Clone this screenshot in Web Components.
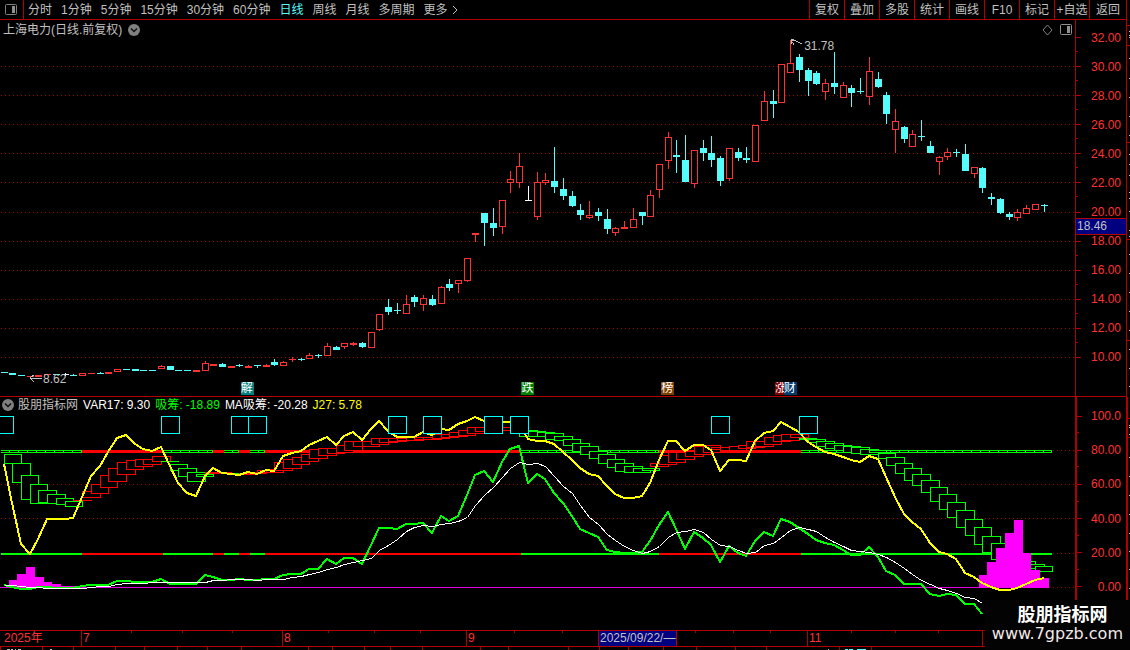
<!DOCTYPE html>
<html lang="zh-CN">
<head>
<meta charset="utf-8">
<title>上海电力</title>
<style>
    html, body {
        margin: 0;
        height: 100%;
        background: #000;
    }
    body {
        font-family: "Liberation Sans", "Noto Sans CJK SC", sans-serif;
        font-size: 12px;
        line-height: 16px;
        color: #c0c0c0;
        --line: #b00000;
        --red: #ff3232;
        --cyan: #54fcfc;
    }
</style>
</head>
<body>
<stock-terminal></stock-terminal>

<script>
const barX = i => Math.floor(4 + i * 8.74);

// velas: [tipo, máximo, cuerpo arriba, cuerpo abajo, mínimo]
// u = sube, d = baja, w = sin cambio
const VELAS = [
    ["d",372,372,373,373], ["d",373,373,375,375], ["d",375,375,376,376], ["u",376,376,377,377],
    ["u",375,375,377,377], ["u",374,374,375,375], ["d",374,374,375,375], ["w",373,374,375,376],
    ["d",374,375,376,376], ["u",373,373,376,376], ["u",373,373,374,374], ["d",372,373,374,374],
    ["u",372,372,374,374], ["u",369,369,372,372], ["d",369,369,370,370], ["d",369,369,371,371],
    ["d",370,370,371,371], ["d",370,370,371,371], ["u",365,366,369,369], ["d",366,366,370,370],
    ["d",370,370,371,371], ["d",370,370,371,371], ["u",370,370,372,372], ["u",361,363,371,371],
    ["u",364,364,366,366], ["d",363,364,367,367], ["u",366,366,368,368], ["d",364,365,366,367],
    ["u",365,366,368,368], ["d",365,365,366,368], ["u",364,365,367,367], ["d",359,362,365,366],
    ["u",361,362,366,366], ["u",357,359,360,362], ["d",358,359,360,361], ["u",353,355,359,359],
    ["d",354,355,356,358], ["u",343,346,356,356], ["d",346,347,350,350], ["u",343,343,347,349],
    ["u",342,343,345,346], ["d",342,343,347,348], ["u",332,332,348,348], ["u",314,314,330,331],
    ["d",299,307,312,315], ["d",303,310,311,314], ["u",295,304,314,314], ["d",295,297,302,307],
    ["u",295,298,305,311], ["d",295,299,305,306], ["u",286,287,304,304], ["d",279,284,288,291],
    ["u",280,280,284,293], ["u",258,258,281,282], ["u",233,233,235,242], ["d",213,213,223,246],
    ["d",208,223,228,236], ["u",200,200,227,234], ["u",171,179,183,193], ["u",153,166,183,188],
    ["w",186,200,201,201], ["u",172,182,217,220], ["u",173,180,183,185], ["d",147,181,187,193],
    ["d",178,189,196,200], ["d",191,196,206,207], ["d",204,210,215,220], ["u",201,215,218,219],
    ["d",208,212,216,221], ["d",209,219,229,234], ["u",227,228,233,236], ["u",221,227,229,229],
    ["u",208,219,228,228], ["d",212,212,216,225], ["u",190,195,217,217], ["u",164,164,190,198],
    ["u",132,137,161,169], ["d",140,155,157,173], ["d",135,160,182,182], ["u",150,150,184,188],
    ["d",140,148,153,161], ["d",136,153,160,167], ["d",156,158,181,186], ["u",148,148,179,181],
    ["d",148,152,158,161], ["d",147,158,160,163], ["u",125,125,162,162], ["u",91,101,121,121],
    ["d",90,101,104,118], ["u",64,64,103,103], ["u",40,63,73,73], ["d",54,57,70,82],
    ["d",68,70,81,96], ["d",71,73,84,85], ["u",79,83,92,100], ["d",52,83,87,94],
    ["u",82,85,98,98], ["d",85,88,93,107], ["d",78,91,92,94], ["u",57,71,97,105],
    ["d",72,79,87,88], ["d",92,95,114,124], ["u",109,121,130,153], ["d",126,127,139,143],
    ["u",130,134,147,147], ["d",120,136,137,141], ["d",141,146,153,153], ["u",156,157,162,175],
    ["u",148,152,157,160], ["d",149,152,153,157], ["d",144,154,171,171], ["u",167,167,174,178],
    ["d",167,168,188,193], ["d",193,197,199,205], ["d",198,199,213,214], ["d",212,214,217,220],
    ["u",209,212,218,221], ["u",205,208,214,214], ["u",204,204,210,210], ["d",204,205,206,212]
];

// líneas del indicador, un valor por barra
const J27 = [464,503,544,554,539,519,519,519,518,497,476,466,452,438,435,444,449,451,447,466,483,493,496,476,468,473,474,475,472,474,470,471,456,453,451,445,441,437,445,436,432,440,429,421,431,437,437,437,432,435,429,430,424,421,417,421,422,422,422,424,439,441,441,444,452,460,468,474,476,486,494,498,498,496,483,460,441,441,451,445,445,450,471,460,460,461,441,433,431,422,427,432,442,447,452,454,457,460,462,456,459,477,497,514,522,529,543,552,554,559,573,577,583,587,590,590,588,584,580,578];
const XICHOU = [585,587,589,589,587,587,588,588,588,586,585,585,585,581,581,582,582,582,579,584,584,584,584,575,577,580,580,579,580,580,579,579,575,574,574,569,569,559,564,558,558,564,545,528,528,529,524,524,523,533,516,521,516,495,475,471,482,462,449,446,483,474,479,493,503,516,529,533,537,550,552,553,553,552,541,525,512,529,549,532,538,545,562,546,553,556,541,532,536,519,522,528,534,540,543,545,550,555,555,547,557,571,575,584,584,584,594,596,594,595,604,604,614];
const MA = [585,585,586,587,587,588,588,588,588,588,587,586,586,584,583,583,583,582,582,582,582,582,582,582,580,580,579,579,579,580,579,579,579,577,576,574,572,569,567,564,562,560,558,550,545,539,531,527,525,526,524,523,521,517,505,495,487,477,468,462,464,463,466,476,486,493,505,517,524,534,540,546,550,553,551,546,537,532,531,529,532,539,545,546,550,553,552,545,543,537,530,527,529,531,537,542,546,550,551,552,554,557,562,568,574,580,584,588,590,593,597,598,603];

// cajas escalonadas [arriba, abajo], cada una ocupa dos barras
const CAJAS = [[454,463],[463,482],[475,499],[484,503],[490,502],[494,503],[498,504],[501,506],[500,500],[491,497],[484,493],[475,487],[468,481],[462,474],[460,469],[459,466],[459,464],[456,461],[461,461],[464,470],[468,476],[472,481],[474,476],[472,473],[472,473],[473,473],[473,474],[473,474],[472,473],[470,472],[469,472],[462,470],[459,468],[457,464],[454,461],[449,458],[448,455],[448,453],[445,452],[441,450],[441,446],[441,446],[438,444],[438,442],[438,441],[438,440],[437,440],[437,439],[437,439],[434,438],[434,437],[432,436],[430,435],[427,433],[427,431],[427,430],[427,430],[427,430],[427,430],[430,436],[431,436],[432,436],[433,439],[436,440],[439,445],[443,451],[446,454],[451,458],[454,463],[459,467],[463,471],[466,472],[468,472],[468,470],[463,466],[455,464],[452,462],[452,459],[451,456],[446,454],[445,452],[447,449],[447,450],[446,450],[445,448],[441,447],[441,446],[437,444],[435,441],[434,440],[434,437],[438,439],[439,442],[441,446],[443,448],[445,450],[446,452],[447,453],[449,454],[450,452],[453,458],[457,465],[463,473],[468,480],[474,485],[480,492],[487,501],[494,509],[502,517],[510,527],[519,535],[527,544],[536,552],[543,559],[550,562],[556,565],[561,566],[564,568],[566,571]];
const cajaRoja = i => (i > 7 && i < 18) || (i > 22 && i < 59 && i !== 26) || (i > 73 && i < 91);

const TRAMOS = [[1,82,"g"],[82,163,"r"],[163,213,"g"],[213,224,"r"],[224,239,"g"],[239,250,"r"],[250,265,"g"],[265,521,"r"],[521,659,"g"],[659,801,"r"],[801,1052,"g"]];
const COLUMNAS = [[9,17,580],[17,26,574],[26,35,567],[35,44,577],[44,52,582],[52,61,584],[61,78,586],[979,987,575],[987,996,562],[996,1005,548],[1005,1014,533],[1014,1023,520],[1023,1031,553],[1031,1040,570],[1040,1049,578]];
const CUADROS = [[-5,13],[161,179],[231,248],[248,266],[388,406],[423,441],[484,502],[510,528],[711,729],[799,817]];

const rect = (x, y, w, h, extra = "") => `<rect x="${x}" y="${y}" width="${w}" height="${h}" ${extra}/>`;
// las líneas gruesas van centradas en el borde del píxel
const puntos = (ys, d = 0.5) => ys.map((y, i) => `${barX(i) + d},${y + d}`).join(" ");
const rejilla = (ys) => ys.map(y => `<path d="M1 ${y}.5H1075" stroke="#a00000" stroke-dasharray="1 3"/>`).join("");

class BaseElement extends HTMLElement {
    constructor() {
        super();
        this.attachShadow({ mode: "open" });
    }
    connectedCallback() {
        this.shadowRoot.innerHTML = this.render();
    }
}

// icono redondo con flecha
class RoundArrow extends BaseElement {
    render() {
        return /*HTML*/`
            <style>
                :host { display: block; width: 12px; height: 12px; }
                button { display: block; width: 12px; height: 12px; padding: 0; border: 0; background: none; }
                svg { display: block; }
            </style>
            <button aria-label="菜单">
                <svg width="12" height="12"><circle cx="6" cy="6" r="6" fill="#808080"/><path d="M3 4.500l3 3 3-3" fill="none" stroke="#101010" stroke-width="1.500"/></svg>
            </button>`;
    }
}
customElements.define("round-arrow", RoundArrow);

class ToolButton extends BaseElement {
    render() {
        return /*HTML*/`
            <style>
                :host { display: flex; }
                button {
                    flex: 1;
                    padding: 0;
                    border: 0;
                    background: none;
                    font: inherit;
                    color: inherit;
                    white-space: nowrap;
                }
                :host([active]) { color: var(--cyan); }
            </style>
            <button><slot></slot></button>`;
    }
}
customElements.define("tool-button", ToolButton);

class ToolBar extends BaseElement {
    render() {
        const periodos = ["分时", "1分钟", "5分钟", "15分钟", "30分钟", "60分钟", "日线", "周线", "月线", "多周期"];
        const acciones = ["复权", "叠加", "多股", "统计", "画线", "F10", "标记", "+自选", "返回"];
        return /*HTML*/`
            <style>
                :host {
                    display: flex;
                    justify-content: space-between;
                    height: 19px;
                    border-bottom: 1px solid var(--line);
                }
                nav { display: flex; gap: 9px; }
                .panel { width: 18px; padding-left: 5px; margin-right: -5px; border-right: 1px solid var(--line); display: flex; align-items: center; }
                .more { display: flex; align-items: center; gap: 4px; }
                .actions { gap: 0; }
                .actions tool-button { width: 34px; border-left: 1px solid var(--line); }
                .actions tool-button:last-child { width: 36px; border-right: 1px solid var(--line); }
                svg { display: block; }
            </style>
            <nav>
                <div class="panel"><svg width="12" height="11"><rect x=".5" y=".5" width="11" height="10" rx="1" fill="none" stroke="#808080"/><rect x="7" y="2" width="3" height="7" fill="#909090"/></svg></div>
                ${periodos.map(p => `<tool-button ${p === "日线" ? "active" : ""}>${p}</tool-button>`).join("")}
                <div class="more">
                    <tool-button>更多</tool-button>
                    <svg width="6" height="10"><path d="M1 1l4 4-4 4" fill="none" stroke="#c0c0c0"/></svg>
                </div>
            </nav>
            <nav class="actions">
                ${acciones.map(a => `<tool-button>${a}</tool-button>`).join("")}
            </nav>`;
    }
}
customElements.define("tool-bar", ToolBar);

// eje de valores de la derecha
class ValueAxis extends BaseElement {
    render() {
        const filas = this.getAttribute("values").split(" ");
        return /*HTML*/`
            <style>
                :host {
                    position: relative;
                    display: flex;
                    flex-direction: column;
                    box-sizing: border-box;
                    width: 52px;
                    border-left: 1px solid var(--line);
                    border-right: 1px solid var(--line);
                    color: var(--red);
                }
                :host([thick]) { border-left-width: 2px; border-right-width: 2px; width: 53px; margin-right: -1px; }
                .row { position: relative; flex: 1; display: flex; align-items: center; justify-content: space-between; padding-right: 5px; }
                .row::before { content: ""; width: 5px; height: 1px; background: var(--line); }
                .row:not(:last-of-type)::after { content: ""; position: absolute; left: 0; bottom: 0; width: 2px; height: 1px; background: var(--line); }
            </style>
            ${filas.map(f => `<div class="row">${f}</div>`).join("")}
            <slot></slot>`;
    }
}
customElements.define("value-axis", ValueAxis);

class CandlePlot extends BaseElement {
    drawCandle([tipo, hi, top, bot, lo], i) {
        const x = barX(i);
        const color = { u: "#ff3232", d: "#54fcfc", w: "#fff" }[tipo];
        const fill = `fill="${color}"`;
        let out = "";
        if (top > hi) out += rect(x, hi, 1, top - hi, fill);
        if (lo > bot) out += rect(x, bot, 1, lo - bot, fill);
        if (tipo === "u" && bot - top > 2) {
            out += `<rect x="${x - 2.5}" y="${top + 0.5}" width="6" height="${bot - top - 1}" fill="#000" stroke="${color}"/>`;
        } else {
            out += rect(x - 3, top, 7, bot - top, fill);
        }
        return out;
    }
    render() {
        return /*HTML*/`
            <style>
                :host { position: relative; display: block; }
                .plot { position: absolute; inset: 0; width: 100%; height: 100%; }
                header { position: relative; display: flex; align-items: center; gap: 6px; padding: 2px 3px 0; }
                .tools { display: flex; gap: 7px; margin-left: auto; }
                .mark, .tag { position: absolute; }
                .mark { display: flex; line-height: 12px; }
                .high { left: 73.5%; top: 4.8%; }
                .high span { margin-top: 2px; }
                .low { left: 2.800%; top: 93.8%; }
                .tag { bottom: 1px; width: 13px; height: 13px; line-height: 13px; color: #fff; overflow: hidden; }
                svg { display: block; }
            </style>
            <svg class="plot" viewBox="0 20 1075 376" preserveAspectRatio="none" shape-rendering="crispEdges">
                ${rejilla([66, 95, 124, 153, 182, 212, 241, 270, 299, 328, 357])}
                ${VELAS.map((v, i) => this.drawCandle(v, i)).join("")}
            </svg>
            <header>
                <span>上海电力(日线.前复权)</span>
                <round-arrow></round-arrow>
                <div class="tools">
                    <svg width="11" height="12"><path d="M5.500 1l4.500 5-4.500 5-4.500-5z" fill="none" stroke="#808080"/></svg>
                    <svg width="12" height="12"><rect x=".5" y=".5" width="11" height="10" rx="1" fill="none" stroke="#909090"/><rect x="7" y="2" width="3" height="7" fill="#909090"/></svg>
                </div>
            </header>
            <div class="mark high">
                <svg width="14" height="12"><path d="M1 2l5 1 6 3M1 6V1h3M1 2l3 5" fill="none" stroke="#c0c0c0" shape-rendering="crispEdges"/></svg>
                <span>31.78</span>
            </div>
            <div class="mark low">
                <svg width="13" height="12"><path d="M0 5.500h12M0 5l4-3M0 5l4 4" fill="none" stroke="#c0c0c0" shape-rendering="crispEdges"/></svg>
                <span>8.62</span>
            </div>
            <span class="tag" style="left:22.4%;background:#008080">解</span>
            <span class="tag" style="left:48.5%;background:#008000">跌</span>
            <span class="tag" style="left:61.5%;background:#804000">榜</span>
            <span class="tag" style="left:72.1%;background:#800000">涨</span>
            <span class="tag" style="left:72.9%;background:#003c70">财</span>`;
    }
}
customElements.define("candle-plot", CandlePlot);

class IndicatorPlot extends BaseElement {
    drawLevels() {
        return TRAMOS.map(([a, b, c]) => {
            const color = c === "g" ? "#0f0" : "#f00";
            let out = rect(a, 450, b - a, 3, `fill="${color}"`) + rect(a, 553, b - a, 2, `fill="${color}"`);
            if (c === "g") {
                // hueco negro entre barra y barra
                for (let x = a; x < b - 1; x += 9) out += rect(x, 451, Math.min(8, b - 1 - x), 1, `fill="#000"`);
            }
            return out;
        }).join("");
    }
    drawSteps() {
        return CAJAS.map(([t, b], i) => {
            const x = barX(i);
            const color = cajaRoja(i) ? "#f00" : "#0f0";
            return `<rect x="${x + 0.5}" y="${t + 0.5}" width="${barX(i + 2) - x}" height="${b - t || 0.01}" fill="#000" stroke="${color}"/>`;
        }).join("");
    }
    render() {
        return /*HTML*/`
            <style>
                :host { position: relative; display: block; }
                .plot { position: absolute; inset: 0; width: 100%; height: 100%; }
                header { position: relative; display: flex; align-items: center; gap: 5px; padding-left: 2px; color: #fff; white-space: nowrap; }
                .name { color: #c0c0c0; margin-left: -1px; }
                .xi { color: #0f0; }
                .j { color: #ff0; }
            </style>
            <svg class="plot" viewBox="0 397 1075 233" preserveAspectRatio="none" shape-rendering="crispEdges">
                ${rejilla([450, 484, 518, 553, 587])}
                ${rect(0, 587, 984, 1, `fill="#e000e0"`)}
                ${this.drawLevels()}
                ${this.drawSteps()}
                ${COLUMNAS.map(([a, b, y]) => rect(a, y, b - a, 588 - y, `fill="#f0f"`)).join("")}
                <polyline points="${puntos(J27, 0)}" fill="none" stroke="#ff0" stroke-width="2" stroke-linejoin="round"/>
                <polyline points="${puntos(XICHOU, 0)}" fill="none" stroke="#0f0" stroke-width="2" stroke-linejoin="round"/>
                <polyline points="${puntos(MA)}" fill="none" stroke="#fff"/>
                ${CUADROS.map(([a, b]) => `<rect x="${a + 0.5}" y="416.5" width="${b - a}" height="17" fill="#000" stroke="#00ffff"/>`).join("")}
            </svg>
            <header>
                <round-arrow></round-arrow>
                <span class="name">股朋指标网</span>
                <span>VAR17: 9.30</span>
                <span class="xi">吸筹: -18.89</span>
                <span>MA吸筹: -20.28</span>
                <span class="j">J27: 5.78</span>
            </header>`;
    }
}
customElements.define("indicator-plot", IndicatorPlot);

// panel: gráfico a la izquierda, eje a la derecha
class ChartPane extends BaseElement {
    render() {
        return /*HTML*/`
            <style>
                :host { display: flex; min-height: 0; }
                ::slotted(:first-child) { flex: 1; min-width: 0; }
            </style>
            <slot></slot>`;
    }
}
customElements.define("chart-pane", ChartPane);

class TimeAxis extends BaseElement {
    render() {
        // [ancho, etiqueta]
        const meses = [[82, "2025年"], [201, "7"], [184, "8"], [132, "9"], [78, "2025/09/22/—"], [131, ""], [175, "11"], [144, ""]];
        const marcas = [131, 182, 232, 328, 374, 420, 514, 562, 695, 733, 770, 851, 895, 938];
        const total = meses.reduce((s, m) => s + m[0], 0);
        return /*HTML*/`
            <style>
                :host {
                    position: relative;
                    display: flex;
                    height: 15px;
                    line-height: 15px;
                    border-top: 1px solid var(--line);
                    border-bottom: 1px solid var(--line);
                    color: var(--red);
                }
                .month { box-sizing: border-box; padding-left: 1px; border-right: 1px solid var(--line); white-space: nowrap; overflow: hidden; }
                .month:first-of-type { padding-left: 4px; }
                .month:last-of-type { border-right: 0; }
                .cursor { background: #000080; color: #c0c0c0; }
                svg { position: absolute; left: 0; top: 0; width: 100%; height: 2px; }
            </style>
            ${meses.map(([w, t]) => `<div class="month ${w === 78 ? "cursor" : ""}" style="width:${w / total * 100}%">${t}</div>`).join("")}
            <svg viewBox="0 0 1127 2" preserveAspectRatio="none">${marcas.map(x => rect(x, 0, 1, 2, `fill="#b00000"`)).join("")}</svg>`;
    }
}
customElements.define("time-axis", TimeAxis);

// franja inferior con las pestañas recortadas
class BottomStrip extends BaseElement {
    render() {
        const lineas = [0, 42, 73, 115, 144, 177, 207, 241, 308, 332, 364, 390, 422, 480, 508, 568, 599, 628, 663, 696, 735, 766, 839, 871];
        return /*HTML*/`
            <style>
                :host { display: block; height: 3px; }
                svg { display: block; width: 100%; height: 3px; }
            </style>
            <svg viewBox="0 0 1127 3" preserveAspectRatio="none" shape-rendering="crispEdges">
                ${lineas.map(x => rect(x, 0, 1, 3, `fill="#b00000"`)).join("")}
                <path d="M7 2.500h3M11 2.500h2M15 2.500h1M18 2.500h3M50 2.500h2M828 2.500h1" stroke="#c0c0c0"/>
                <path d="M845 2.500h3M849 2.500h4M857 2.500h9" stroke="#54fcfc"/>
            </svg>`;
    }
}
customElements.define("bottom-strip", BottomStrip);

// borde derecho, asoma el panel de cotizaciones
class SideStrip extends BaseElement {
    render() {
        const puntosY = [31, 35, 37, 58, 78, 97, 116, 135, 154, 164, 175, 192, 198, 211, 230, 236, 254, 273, 292, 311, 330, 349, 368, 386, 425, 427, 434, 457, 476, 495, 514, 533, 551, 569, 588];
        const rojas = [25, 45, 142, 239, 340, 418, 437];
        return /*HTML*/`
            <style>
                :host { display: block; width: 3px; }
                svg { display: block; width: 3px; height: 100%; }
            </style>
            <svg viewBox="0 0 3 650" preserveAspectRatio="none" shape-rendering="crispEdges">
                ${puntosY.map(y => rect(2, y, 1, 1, `fill="#c0c0c0"`)).join("")}
                ${rojas.map(y => rect(0, y, 3, 1, `fill="#b00000"`)).join("")}
            </svg>`;
    }
}
customElements.define("side-strip", SideStrip);

class SiteMark extends BaseElement {
    render() {
        return /*HTML*/`
            <style>
                :host {
                    display: flex;
                    flex-direction: column;
                    align-items: center;
                    padding: 5px 7px 7px;
                    background: #030303;
                    color: #fff;
                }
                strong { font: 700 18px/20px "Liberation Sans", "Noto Sans CJK SC", sans-serif; padding-left: 10px; }
                span { font: 16px/18px "DejaVu Sans", sans-serif; color: #f4e8e8; }
            </style>
            <strong>股朋指标网</strong>
            <span>www.7gpzb.com</span>`;
    }
}
customElements.define("site-mark", SiteMark);

class StockTerminal extends BaseElement {
    render() {
        return /*HTML*/`
            <style>
                :host { position: relative; display: flex; height: 100vh; overflow: hidden; }
                main { flex: 1; min-width: 0; display: flex; flex-direction: column; }
                .price { flex: 376 1 0; border-bottom: 1px solid var(--line); }
                .indicator { flex: 233 1 0; }
                .price value-axis { padding: 3px 0 24px; }
                .indicator value-axis { padding: 2px 0 26px; }
                .now {
                    position: absolute;
                    left: 0;
                    right: 0;
                    top: 52.6%;
                    padding-left: 1px;
                    line-height: 15px;
                    background: #000080;
                    color: #c0c0c0;
                    border: solid var(--line);
                    border-width: 1px 0;
                }
                site-mark { position: absolute; right: 0; bottom: 0; }
            </style>
            <main>
                <tool-bar></tool-bar>
                <chart-pane class="price">
                    <candle-plot></candle-plot>
                    <value-axis values="32.00 30.00 28.00 26.00 24.00 22.00 20.00 18.00 16.00 14.00 12.00 10.00"><span class="now">18.46</span></value-axis>
                </chart-pane>
                <chart-pane class="indicator">
                    <indicator-plot></indicator-plot>
                    <value-axis thick values="100.0 80.00 60.00 40.00 20.00 0.00"></value-axis>
                </chart-pane>
                <time-axis></time-axis>
                <bottom-strip></bottom-strip>
            </main>
            <side-strip></side-strip>
            <site-mark></site-mark>`;
    }
}
customElements.define("stock-terminal", StockTerminal);
</script>
</body>
</html>
